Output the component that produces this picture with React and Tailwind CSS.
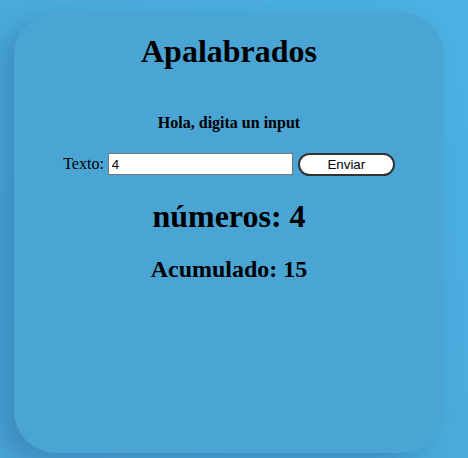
import React, { useState } from 'react';

function App() {
  const [texto, setTexto] = useState('4');

  return (
    <div
      className="min-h-[458px] w-[468px] bg-gradient-to-tr from-[#4aa6d8] to-[#4cb1e3] pt-[13px] pl-[14px]"
      style={{ fontFamily: '"Liberation Serif", serif' }}
    >
      <div className="flex h-[440px] w-[430px] flex-col items-center rounded-[42px] bg-[#4aa5d4] text-black shadow-[-14px_10px_26px_rgba(40,100,150,0.4)]">
        <h1 className="mt-[20px] text-[32px] font-bold leading-[37px]">Apalabrados</h1>
        <h4 className="mt-[44px] text-[16px] font-bold leading-[18px]">Hola, digita un input</h4>
        <div className="mt-[20px] flex items-center text-[16px]">
          <span className="mr-[4px]">Texto:</span>
          <input
            type="text"
            value={texto}
            onChange={(e) => setTexto(e.target.value)}
            className="h-[22px] w-[185px] border border-[#767676] bg-white px-[3px] text-[13.33px] text-black"
            style={{ fontFamily: '"Liberation Sans", sans-serif' }}
          />
          <button
            className="ml-[5px] h-[23px] w-[97px] rounded-full border-2 border-[#333] bg-white text-[13.33px] text-black"
            style={{ fontFamily: '"Liberation Sans", sans-serif' }}
          >
            Enviar
          </button>
        </div>
        <h1 className="mt-[22px] text-[32px] font-bold leading-[37px]">números: {texto.length ? texto : 0}</h1>
        <h2 className="mt-[20px] text-[24px] font-bold leading-[28px]">Acumulado: 15</h2>
      </div>
    </div>
  );
}

export default App;
